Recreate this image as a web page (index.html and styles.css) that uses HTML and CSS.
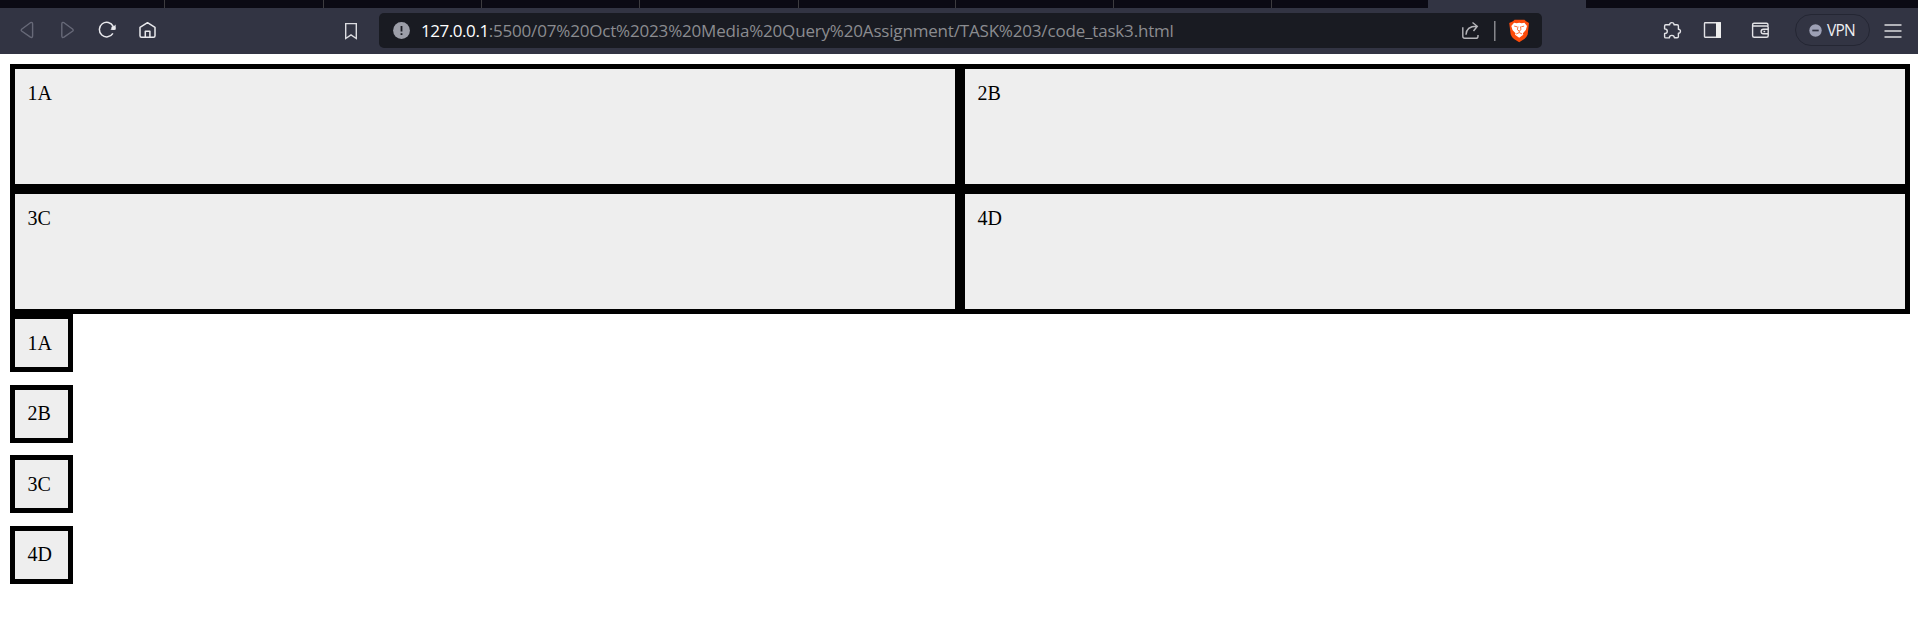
FILE: index.html
```html
<!DOCTYPE html>
<html lang="en">
<head>
<meta charset="utf-8">
<title>code_task3.html</title>
<link rel="stylesheet" href="styles.css">
</head>
<body>
<header class="browser">
  <div class="tabs">
    <i class="tab first"></i><i class="tab wide"></i><i class="tab"></i><i class="tab"></i><i class="tab wide"></i><i class="tab narrow"></i><i class="tab"></i><i class="tab"></i><i class="tab last"></i><i class="tab active"></i><i class="tab rest"></i>
  </div>
  <div class="toolbar">
    <svg class="nav" width="170" height="46" viewBox="0 8 170 46">
      <g fill="none" stroke="#676978" stroke-width="1.4" stroke-linejoin="round">
        <path d="M21.6 29.2 30.4 22.7Q32.6 21.7 32.6 24.1V35.8Q32.6 38.2 30.4 37.1L21.6 31Q20.7 30.1 21.6 29.2Z"/>
        <path d="M72.8 29.2 64 22.7Q61.8 21.7 61.8 24.1V35.8Q61.8 38.2 64 37.1L72.8 31Q73.7 30.1 72.8 29.2Z"/>
      </g>
      <g fill="none" stroke="#e9e9ed" stroke-width="1.5" stroke-linejoin="round">
        <path d="M112.9 33.4A7.3 7.3 0 1 1 113.2 26.3"/>
        <path d="M140 27.4 147.5 22.7 155 27.4V35.8Q155 37.3 153.5 37.3H141.5Q140 37.3 140 35.8ZM145.3 37V31.2H149.9V37"/>
      </g>
      <circle cx="113.4" cy="28" r="2.1" fill="#e9e9ed"/>
      <path d="M115.6 24.6V29.8H110.4Z" fill="#e9e9ed"/>
    </svg>
    <svg class="bookmark" width="16" height="20" viewBox="0 0 16 20"><path d="M2.7 2.6H13.3V17.5L8 13.9 2.7 17.5Z" fill="none" stroke="#dcdce1" stroke-width="1.4"/></svg>
    <div class="address">
      <svg class="info" width="17" height="17" viewBox="0 0 17 17"><circle cx="8.5" cy="8.5" r="8.4" fill="#9c9ea8"/><path d="M8.5 4V9.5M8.5 11.2V13" stroke="#191b22" stroke-width="1.8"/></svg>
      <span class="host">127.0.0.1</span><span class="path">:5500/07%20Oct%2023%20Media%20Query%20Assignment/TASK%203/code_task3.html</span>
      <svg class="actions" width="80" height="35" viewBox="1460 13 80 35">
        <path d="M1462.8 27.3V36.3Q1462.8 38.3 1464.8 38.3H1476Q1478 38.3 1478 36.2V35M1466 34.8Q1466.2 26.3 1476.5 26.3M1472.5 22.5 1477.3 26.3 1473.5 31" fill="none" stroke="#b5b5b9" stroke-width="1.4"/>
        <path d="M1494.8 21V41" stroke="#99999e" stroke-width="1.3"/>
        <path d="M1514.5 19.8H1524.5L1526 21.3 1529 23 1527.7 34.5Q1526.7 37.2 1524.3 38.9L1519.2 42.3 1514 38.9Q1511.6 37.2 1510.7 34.5L1509.2 23 1513 21.3Z" fill="#fb4b0a"/>
        <path d="M1514 22.7 1516.7 23.3 1519.2 22.8 1521.7 23.3 1524.4 22.7 1527 26 1525.8 30 1522.9 33.2 1523.3 34.7 1519.2 37.8 1515 34.7 1515.5 33.2 1512.5 30 1511.3 26Z" fill="#fff"/>
        <path d="M1514.2 26.1 1517.2 26.8M1524.1 26.1 1521.2 26.8M1518 26.5 1517.4 29.7 1519.2 31 1521 29.7 1520.4 26.5M1519.2 31V32.5M1516.2 34 1519.2 32.6 1522.2 34" fill="none" stroke="#fb4b0a" stroke-width=".8"/>
      </svg>
    </div>
    <svg class="tools" width="120" height="46" viewBox="1655 8 120 46">
      <g fill="none" stroke="#e2e2e6" stroke-width="1.4" stroke-linejoin="round">
        <path d="M1665.7 24.8H1669.7C1669.2 22.1 1674.1 21.6 1674 24.8H1677.1Q1678.4 24.8 1678.4 26.1V29.3C1681.3 29.2 1681 33.4 1678.4 33.2V36.4Q1678.4 37.7 1677.1 37.7H1674.4C1674.2 34.6 1669.4 34.6 1669.3 37.9H1665.8Q1664.6 37.9 1664.6 36.7V33.4C1668.2 33.3 1668.2 29 1664.6 28.9V25.9Q1664.6 24.8 1665.7 24.8Z"/>
        <rect x="1704.5" y="22.8" width="15.8" height="14.5" rx=".7"/>
        <path d="M1768 26.3V24.7Q1768 23.3 1766.5 23.3H1754Q1752.6 23.3 1752.6 24.7V35.8Q1752.6 37.3 1754.2 37.3H1766.6Q1768.2 37.3 1768.2 35.8V27.6Q1768.2 26 1766.6 26H1753M1768 29.3H1763.4Q1761.1 29.3 1761.1 31.5T1763.4 33.7H1768M1763.5 31.5H1765.2"/>
      </g>
      <path d="M1716 22.2H1721V38H1716Z" fill="#eee"/>
    </svg>
    <div class="vpn"><svg width="13" height="13" viewBox="0 0 13 13"><circle cx="6.5" cy="6.5" r="6.2" fill="#9da0b5"/><path d="M3.3 6.5H9.7" stroke="#323443" stroke-width="1.7"/></svg><span>VPN</span></div>
    <svg class="menu" width="18" height="16" viewBox="0 0 18 16"><path d="M.5 2H17.5M.5 8H17.5M.5 14H17.5" stroke="#dcdce0" stroke-width="1.4"/></svg>
  </div>
</header>
<main class="page">
  <section class="grid">
    <div class="box">1A</div><div class="box">2B</div>
    <div class="box">3C</div><div class="box">4D</div>
  </section>
  <section class="stack">
    <div class="box">1A</div><div class="box">2B</div><div class="box">3C</div><div class="box">4D</div>
  </section>
</main>
</body>
</html>
```

FILE: styles.css
```css
* { box-sizing: border-box; }
body { margin: 0; background: #fff; overflow: hidden; }
svg { display: block; flex: none; }
.browser { height: 54px; background: #323443; }
.tabs { display: flex; height: 8px; }
.tab { flex: none; width: 158px; background: #0b0a14; border-right: 1px solid #3d3c40; }
.tab.first { width: 165px; }
.tab.wide { width: 159px; }
.tab.narrow { width: 157px; }
.tab.last { width: 156px; border: 0; }
.tab.active { background: #323443; border: 0; }
.tab.rest { flex: 1; border: 0; }
.toolbar { display: flex; align-items: center; height: 46px; }
.bookmark { margin: 0 20px 0 173px; }
.address { display: flex; align-items: center; align-self: flex-start; width: 1163px; height: 35px; margin-top: 5px; padding-left: 14px; border-radius: 5px; background: #191b22; font: 17px/24px "Open Sans", "Noto Sans", sans-serif; white-space: pre; }
.info { margin-right: 11px; }
.host { color: #fff; letter-spacing: -0.45px; }
.path { color: #8b8c90; letter-spacing: -0.18px; }
.actions { margin: 0 2px 0 auto; }
.tools { margin-left: 113px; }
.vpn { display: flex; align-items: center; gap: 5px; width: 75px; height: 32px; margin-left: 20px; padding-left: 13px; border: 1px solid #242633; border-radius: 16px; color: #eeeef2; font: 15.5px/20px "Open Sans", "Noto Sans", sans-serif; margin-bottom: 2px; letter-spacing: -0.8px; }
.vpn span { padding-bottom: 1px; }
.menu { margin-left: 14px; }
.page { padding: 10px 8px 0 10px; font: 20px/23px "Liberation Serif", "Times New Roman", serif; color: #000; }
.box { padding: 12.5px; border: 5px solid #000; background: #eee; }
.grid { display: grid; grid-template-columns: 950px 950px; grid-auto-rows: 125px; }
.stack { display: grid; grid-template-columns: 63px; grid-auto-rows: 58px; gap: 12.5px; }
```
